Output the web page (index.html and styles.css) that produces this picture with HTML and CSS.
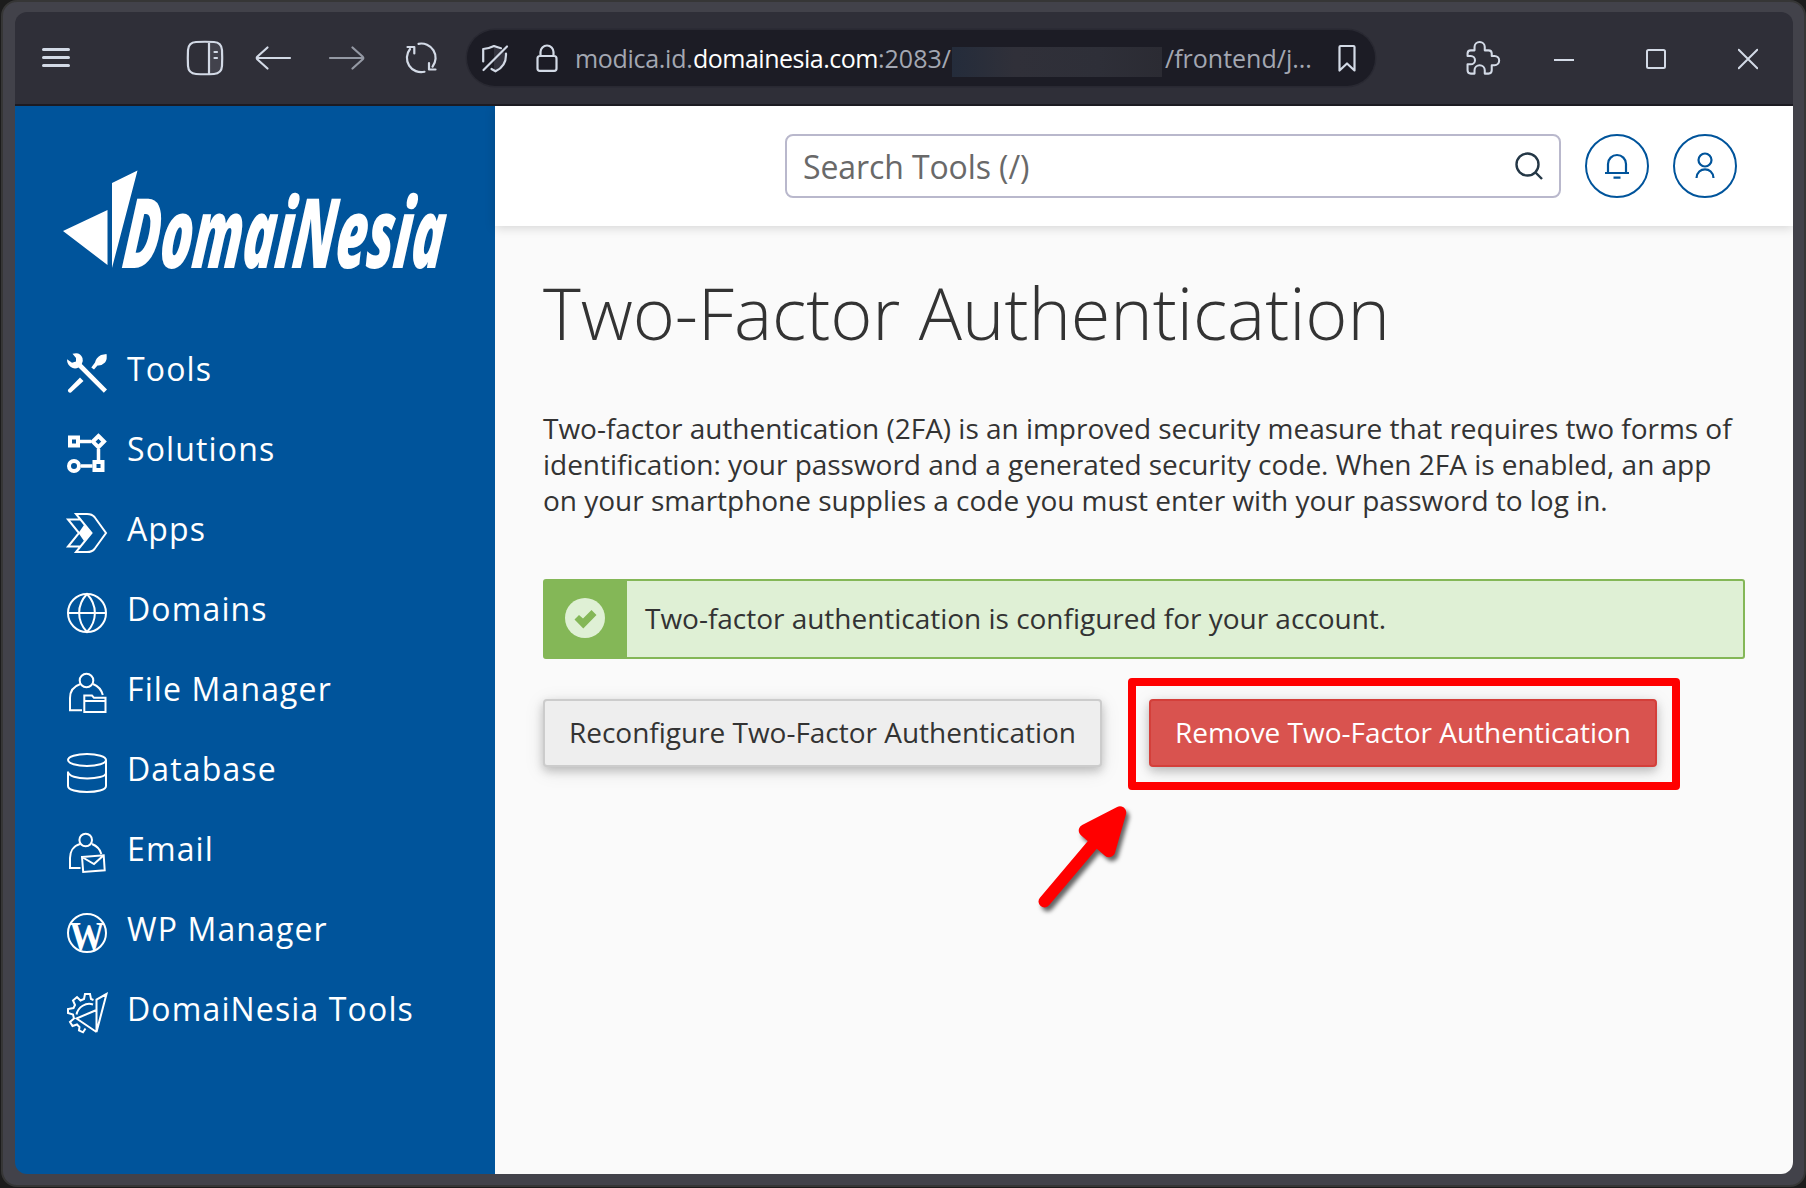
FILE: index.html
```html
<!DOCTYPE html>
<html lang="en" class="page">
<head>
  <meta charset="UTF-8">
  <title>Two-Factor Authentication</title>

  <meta name="viewport" content="width=device-width,initial-scale=1.0">

  <link rel="stylesheet" href="styles.css">
</head>
<body class="page__body">
  <div class="window">
    <div class="toolbar">
      <svg class="toolbar__icon toolbar__icon--menu" width="40" height="40" viewBox="0 0 40 40"><path d="M7.5 11.5h25M7.5 19.5h25M7.5 27.5h25" stroke-width="3"/></svg>
      <svg class="toolbar__icon toolbar__icon--sidebar" width="40" height="40" viewBox="0 0 40 40"><path d="M24 4h6q6.500 1 6.500 8v16q0 7-6.500 8h-6z" fill="#42424c" stroke="none"/><path d="M11 4Q20 3.500 29 4Q36.500 4.500 37 12Q37.400 20 37 28Q36.500 35.500 29 36Q20 36.500 11 36Q3.500 35.500 3 28Q2.600 20 3 12Q3.500 4.500 11 4zM24 4v32M29.500 14h2.500M29.500 20h2.500"/></svg>
      <svg class="toolbar__icon toolbar__icon--back" width="40" height="40" viewBox="0 0 40 40"><path d="M37 20H4M14.500 9.500L4.500 18.500Q3 20 4.500 21.500L14.500 30.500"/></svg>
      <svg class="toolbar__icon toolbar__icon--forward" width="40" height="40" viewBox="0 0 40 40"><path d="M3 20H36M25.500 9.500L35.500 18.500Q37 20 35.500 21.500L25.500 30.500"/></svg>
      <svg class="toolbar__icon toolbar__icon--reload" width="40" height="40" viewBox="0 0 40 40"><path d="M17.500 5.800A14.300 14.300 0 0 1 31.500 28.700M23.500 33.800A14.300 14.300 0 0 1 9 11M6.500 9H13.300V15.500M34.500 31.500H28V25"/></svg>
      <div class="address">
        <svg class="address__icon address__icon--shield" width="32" height="32" viewBox="0 0 32 32"><path d="M16 3v26q12-5 11-18z" fill="#34343f" stroke="none"/><path d="M5.200 19.500V7Q11 6.500 16 4Q20 5.500 23 6.200M28 11.500V13C28 21 24.500 26 17.500 29.300L13.500 27M29 4.500L5.500 28"/></svg>
        <svg class="address__icon address__icon--lock" width="28" height="32" viewBox="0 0 28 32"><path d="M7.500 14V10a6.500 6.500 0 0 1 13 0v4M7 14h14q2.500 0 2.500 2.500v10q0 2.300-2.300 2.300H6.800q-2.300 0-2.300-2.300v-10Q4.500 14 7 14z"/></svg>
        <div class="address__url"><span class="address__part address__part--sub">modica.id.</span><span class="address__part address__part--domain">domainesia.com</span><span class="address__part address__part--port">:2083/</span><span class="address__redacted"></span><span class="address__part address__part--path">/frontend/j...</span></div>
        <svg class="address__icon address__icon--bookmark" width="24" height="32" viewBox="0 0 24 32"><path d="M5.500 4h13q1 0 1 1v23.500L12 21.500 4.500 28.500V5q0-1 1-1z"/></svg>
      </div>
      <svg class="toolbar__icon toolbar__icon--puzzle" width="40" height="40" viewBox="0 0 40 40"><path d="M11 12V8.500a5.500 5.500 0 0 1 11 0V12h4q3.500 0 3.500 3.500V18h3a5 5 0 0 1 0 10h-3v5.500q0 3.500-3.500 3.500h-4v-3.500a5.500 5.500 0 0 0-11 0V37H7q-3.500 0-3.500-3.500V27H7a4.500 4.500 0 0 0 0-9H3.500V15.500Q3.500 12 7 12z" transform="translate(1.300 1.200) scale(.93)"/></svg>
      <svg class="toolbar__icon toolbar__icon--minimize" width="20" height="24" viewBox="0 0 20 24"><path d="M0 14h20" stroke-width="2" stroke-linecap="butt"/></svg>
      <svg class="toolbar__icon toolbar__icon--maximize" width="20" height="24" viewBox="0 0 20 24"><rect x="1" y="4" width="18" height="18" rx="1.500" stroke-width="2"/></svg>
      <svg class="toolbar__icon toolbar__icon--close" width="20" height="24" viewBox="0 0 20 24"><path d="M.7 3.700l18.600 18.600M19.300 3.700L.7 22.300" stroke-width="2"/></svg>
    </div>

    <div class="layout">
      <div class="sidebar">
        <svg class="sidebar__logo" width="400" height="110" viewBox="0 0 400 110">
          <path d="M0 65L44.500 44V99zM49 17L74.500 4.500 49 102z"/>
          <text class="sidebar__brand" transform="translate(58 102) skewX(-6)" textLength="321" lengthAdjust="spacingAndGlyphs">DomaiNesia</text>
        </svg>
        <ul class="menu">
          <li class="menu__item">
            <svg class="menu__icon" viewBox="0 0 40 40"><path d="M5.500.8Q13-1.500 15.500 5Q16.500 8.500 14.800 11L40 36.500 36.800 39.700 11.500 14.500Q7.500 17 3.500 13.800Q0 11 0 6.200L5 9.800 9 8.500V5zM24.300 14.500L28 9.500Q29 4.500 34 2L39.500 1Q40.500 6 38 9.500Q34.500 13 30.500 12.500L27 16.500zM13 24.500L16.500 28 4 39.500Q1 40.500.8 37z" fill="#fff" stroke="none"/></svg>
            <span class="menu__label">Tools</span>
          </li>
          <li class="menu__item">
            <svg class="menu__icon" viewBox="0 0 40 40"><g stroke-width="4"><rect x="3" y="4.500" width="8" height="8"/><path d="M31.400 3L37 8.600 31.400 14.200 25.800 8.600z"/><circle cx="7" cy="33" r="5"/><rect x="27.500" y="29" width="8" height="8"/></g><path d="M13 8.500h11M31.500 16v11M14 33h11.500" stroke-width="3.500"/></svg>
            <span class="menu__label">Solutions</span>
          </li>
          <li class="menu__item">
            <svg class="menu__icon" viewBox="0 0 40 40"><path d="M9 1H20Q25 1 27.500 4L39 20 27.500 36Q25 39 20 39H9L24.500 20zM13.500 6.500H1L12 20 1 33.500H13.500"/><path d="M11.500 20L17 12 24.500 20 17 28z" fill="#fff" stroke="none"/></svg>
            <span class="menu__label">Apps</span>
          </li>
          <li class="menu__item">
            <svg class="menu__icon" viewBox="0 0 40 40"><circle cx="20" cy="20" r="19"/><path d="M20 1C9.500 12 9.500 28 20 39C30.500 28 30.500 12 20 1zM1 20H39"/></svg>
            <span class="menu__label">Domains</span>
          </li>
          <li class="menu__item">
            <svg class="menu__icon" viewBox="0 0 40 40"><circle cx="19.500" cy="7.500" r="6.800"/><path d="M13.500 11C6 13.500 3 19 3 25V37.300H15M26 11C31 13 34.500 17 35.800 22M17.300 39V22.500H25L27 24.800H38.500V39zM17.300 28H38.500"/></svg>
            <span class="menu__label">File Manager</span>
          </li>
          <li class="menu__item">
            <svg class="menu__icon" viewBox="0 0 40 40"><ellipse cx="20" cy="7" rx="19" ry="6"/><path d="M39 7V33C39 41 1 41 1 33V18.500C1 28 39 27 39 20"/></svg>
            <span class="menu__label">Database</span>
          </li>
          <li class="menu__item">
            <svg class="menu__icon" viewBox="0 0 40 40"><circle cx="18.700" cy="7" r="6.300"/><path d="M13 11C6 13 3 19 3 25V35H13.500M25 11C30 13 33 16 34.300 21M15 24L36.700 22.300 37.700 37.300 16.200 39zL27 31 36.700 22.300"/></svg>
            <span class="menu__label">Email</span>
          </li>
          <li class="menu__item">
            <svg class="menu__icon" viewBox="0 0 40 40"><circle cx="20" cy="20" r="19"/><text class="menu__glyph" x="2.500" y="36" textLength="35" lengthAdjust="spacingAndGlyphs">W</text></svg>
            <span class="menu__label">WP Manager</span>
          </li>
          <li class="menu__item">
            <svg class="menu__icon" viewBox="0 0 40 40"><path d="M26.500 7L24 6 23 1H18L17 6 13.500 7.500 10 4 6 7.500 8 12 6.500 15 1 16V20L6 21.500 7 25.500 3 29 5.500 33 10 31.500 12.500 34 12 37.500 16 39.300 18.500 35.500M9.500 21.500C11 14 19 9 26 11.500M39.500 1L29.500 6.500V39zM29.500 17L9.500 25.500 29.500 39"/></svg>
            <span class="menu__label">DomaiNesia Tools</span>
          </li>
        </ul>
      </div>

      <div class="content">
        <div class="header">
          <div class="search">
            <span class="search__placeholder">Search Tools (/)</span>
            <svg width="28" height="28" viewBox="0 0 28 28"><circle cx="12.500" cy="12.500" r="11" fill="none" stroke="#243746" stroke-width="2.400"/><path d="M20 20L27 27" stroke="#243746" stroke-width="2.400"/></svg>
          </div>
          <div class="header__button">
            <svg width="26" height="28" viewBox="0 0 26 28"><path d="M4 21V12a9 9 0 0 1 18 0v9M1 21H25M9.500 25.700h7"/></svg>
          </div>
          <div class="header__button">
            <svg width="26" height="28" viewBox="0 0 26 28"><circle cx="13" cy="8" r="6.500"/><path d="M4.500 26C5 14.500 21 14.500 21.500 26"/></svg>
          </div>
        </div>

        <div class="main">
          <h1 class="main__heading">Two-Factor Authentication</h1>
          <p class="main__description">Two-factor authentication (2FA) is an improved security measure that requires two forms of<br>identification: your password and a generated security code. When 2FA is enabled, an app<br>on your smartphone supplies a code you must enter with your password to log in.</p>
          <div class="alert">
            <div class="alert__icon">
              <svg width="40" height="40" viewBox="0 0 40 40"><circle cx="20" cy="20" r="20" fill="#dff0d5"/><path d="M9.500 21.500L14 17 18 20.500 26.500 12 31.500 17 18.300 30.500z" fill="#84b757"/></svg>
            </div>
            <div class="alert__text">Two-factor authentication is configured for your account.</div>
          </div>
          <div class="actions">
            <button class="button" type="button">Reconfigure Two-Factor Authentication</button>
            <div class="actions__marked">
              <button class="button button--danger" type="button">Remove Two-Factor Authentication</button>
              <div class="marker"></div>
              <svg class="pointer" width="110" height="130" viewBox="0 0 110 130"><path d="M13.500 104.500L68 40" stroke="#f00" stroke-width="12" stroke-linecap="round"/><path d="M89 15.500L54 33.500 78 54z" fill="#f00" stroke="#f00" stroke-width="12.500" stroke-linejoin="round"/></svg>
            </div>
          </div>
        </div>
      </div>
    </div>
  </div>
</body>
</html>
```
FILE: styles.css
```css
*, *::before, *::after {
  box-sizing: border-box;
}

.page, .page__body {
  margin: 0;
  height: 100%;
  font-family: "Open Sans", "Noto Sans", sans-serif;
  color: #333;
}

.page__body {
  background: #1c1c1c;
  padding: 0 0 1px 1px;
  overflow: hidden;
}

.window {
  display: flex;
  flex-direction: column;
  height: 1187px;
  padding: 10px 11px 11px 12px;
  border: 2px solid #363636;
  border-radius: 16px;
  background: #42424a;
}

.toolbar {
  display: flex;
  align-items: center;
  flex: none;
  height: 94px;
  padding-left: 21px;
  border-bottom: 2px solid #1c1b22;
  border-radius: 12px 12px 0 0;
  background: #2f2f38;
}

.toolbar__icon, .address__icon {
  flex: none;
  fill: none;
  stroke: #d3dae6;
  stroke-width: 2.2;
  stroke-linecap: round;
  stroke-linejoin: round;
}

.toolbar__icon--sidebar {
  margin-left: 109px;
}

.toolbar__icon--back {
  margin-left: 28px;
}

.toolbar__icon--forward {
  margin-left: 34px;
  opacity: .62;
}

.toolbar__icon--reload {
  margin-left: 34px;
}

.address {
  display: flex;
  align-items: center;
  width: 908px;
  height: 56px;
  margin-left: 26px;
  border-radius: 28px;
  background: #1c1c25;
  box-shadow: 0 0 0 1.5px #292932;
}

.address__icon--shield {
  margin-left: 11px;
}

.address__icon--lock {
  margin-left: 23px;
}

.address__icon--bookmark {
  margin-left: auto;
  margin-right: 16px;
}

.address__url {
  display: flex;
  align-items: center;
  margin-left: 14px;
  color: #a3a7b2;
  font-size: 25px;
  white-space: nowrap;
}

.address__part--sub {
  width: 118px;
  letter-spacing: -.3px;
}

.address__part--domain {
  width: 185px;
  color: #fff;
  letter-spacing: -.5px;
}

.address__part--port {
  width: 74px;
}

.address__redacted {
  width: 210px;
  height: 30px;
  margin: 8px 3px 0 0;
  background: linear-gradient(90deg, #242c3b, #303039 30%, #2e2f38 70%, #2b2b33);
}

.toolbar__icon--puzzle {
  margin-left: 88px;
}

.toolbar__icon--minimize {
  margin-left: 51px;
}

.toolbar__icon--maximize, .toolbar__icon--close {
  margin-left: 72px;
}

.layout {
  display: flex;
  flex: 1;
  overflow: hidden;
  border-radius: 0 0 12px 12px;
}

.sidebar {
  flex: none;
  width: 480px;
  padding: 60px 0 0 48px;
  background: #00549b;
}

.sidebar__logo {
  display: block;
  overflow: visible;
  fill: #fff;
}

.sidebar__brand {
  font-size: 97px;
  font-style: italic;
  font-weight: 800;
}

.menu {
  list-style: none;
  margin: 57px 0 0;
  padding: 0 0 0 4px;
}

.menu__item {
  display: flex;
  align-items: center;
  gap: 20px;
  height: 80px;
}

.menu__icon {
  flex: none;
  width: 40px;
  height: 40px;
  overflow: visible;
  fill: none;
  stroke: #fff;
  stroke-width: 2;
}

.menu__glyph {
  font-family: "Liberation Serif", serif;
  font-size: 41px;
  font-weight: 700;
  fill: #fff;
  stroke: none;
}

.menu__label {
  padding-bottom: 9px;
  color: #fff;
  font-size: 32px;
  letter-spacing: 1.13px;
  white-space: nowrap;
}

.content {
  flex: 1;
  background: #fafafa;
}

.header {
  display: flex;
  align-items: center;
  justify-content: flex-end;
  gap: 24px;
  height: 120px;
  padding-right: 56px;
  background: #fff;
  box-shadow: 0 2px 10px rgba(0, 0, 0, .15);
}

.search {
  display: flex;
  align-items: center;
  justify-content: space-between;
  width: 776px;
  height: 64px;
  padding: 0 16px;
  border: 2px solid #b9b8cc;
  border-radius: 8px;
}

.search__placeholder {
  color: #696969;
  font-size: 32px;
  letter-spacing: -.1px;
}

.header__button {
  display: flex;
  align-items: center;
  justify-content: center;
  width: 64px;
  height: 64px;
  border: 2px solid #00549b;
  border-radius: 50%;
  fill: none;
  stroke: #00549b;
  stroke-width: 2.2;
}

.main {
  padding: 37px 48px 0;
}

.main__heading {
  margin: 0;
  font-size: 72px;
  font-weight: 300;
  letter-spacing: -.08px;
  line-height: 98px;
  white-space: nowrap;
}

.main__description {
  margin: 49px 0 61px;
  font-size: 28px;
  letter-spacing: -.02px;
  line-height: 36px;
  white-space: nowrap;
}

.alert {
  display: flex;
  height: 80px;
  border: 2px solid #84b757;
  border-radius: 3px;
  background: #dff0d5;
}

.alert__icon {
  display: flex;
  align-items: center;
  justify-content: center;
  width: 82px;
  padding: 0 2px 2px 0;
  background: #84b757;
}

.alert__text {
  padding-left: 18px;
  font-size: 28px;
  letter-spacing: -.02px;
  line-height: 74px;
  white-space: nowrap;
}

.actions {
  display: flex;
  gap: 47px;
  margin-top: 40px;
}

.actions__marked {
  position: relative;
}

.button {
  display: block;
  width: 559px;
  height: 68px;
  padding: 0 0 2px;
  border: 2px solid #ccc;
  border-radius: 4px;
  background: #eee;
  box-shadow: 0 4px 10px rgba(0, 0, 0, .2), 0 4px 20px rgba(0, 0, 0, .1);
  color: #333;
  font-family: inherit;
  font-size: 28px;
  letter-spacing: -.02px;
  white-space: nowrap;
}

.button--danger {
  width: 508px;
  border-color: #d43f3a;
  background: #d9534f;
  color: #fff;
}

.marker {
  position: absolute;
  top: -21px;
  left: -21px;
  width: 552px;
  height: 112px;
  border: 8px solid #f00;
  border-radius: 4px;
}

.pointer {
  position: absolute;
  top: 98px;
  left: -118px;
  overflow: visible;
  filter: drop-shadow(3px 4px 2px rgba(0, 0, 0, .6));
}
```
